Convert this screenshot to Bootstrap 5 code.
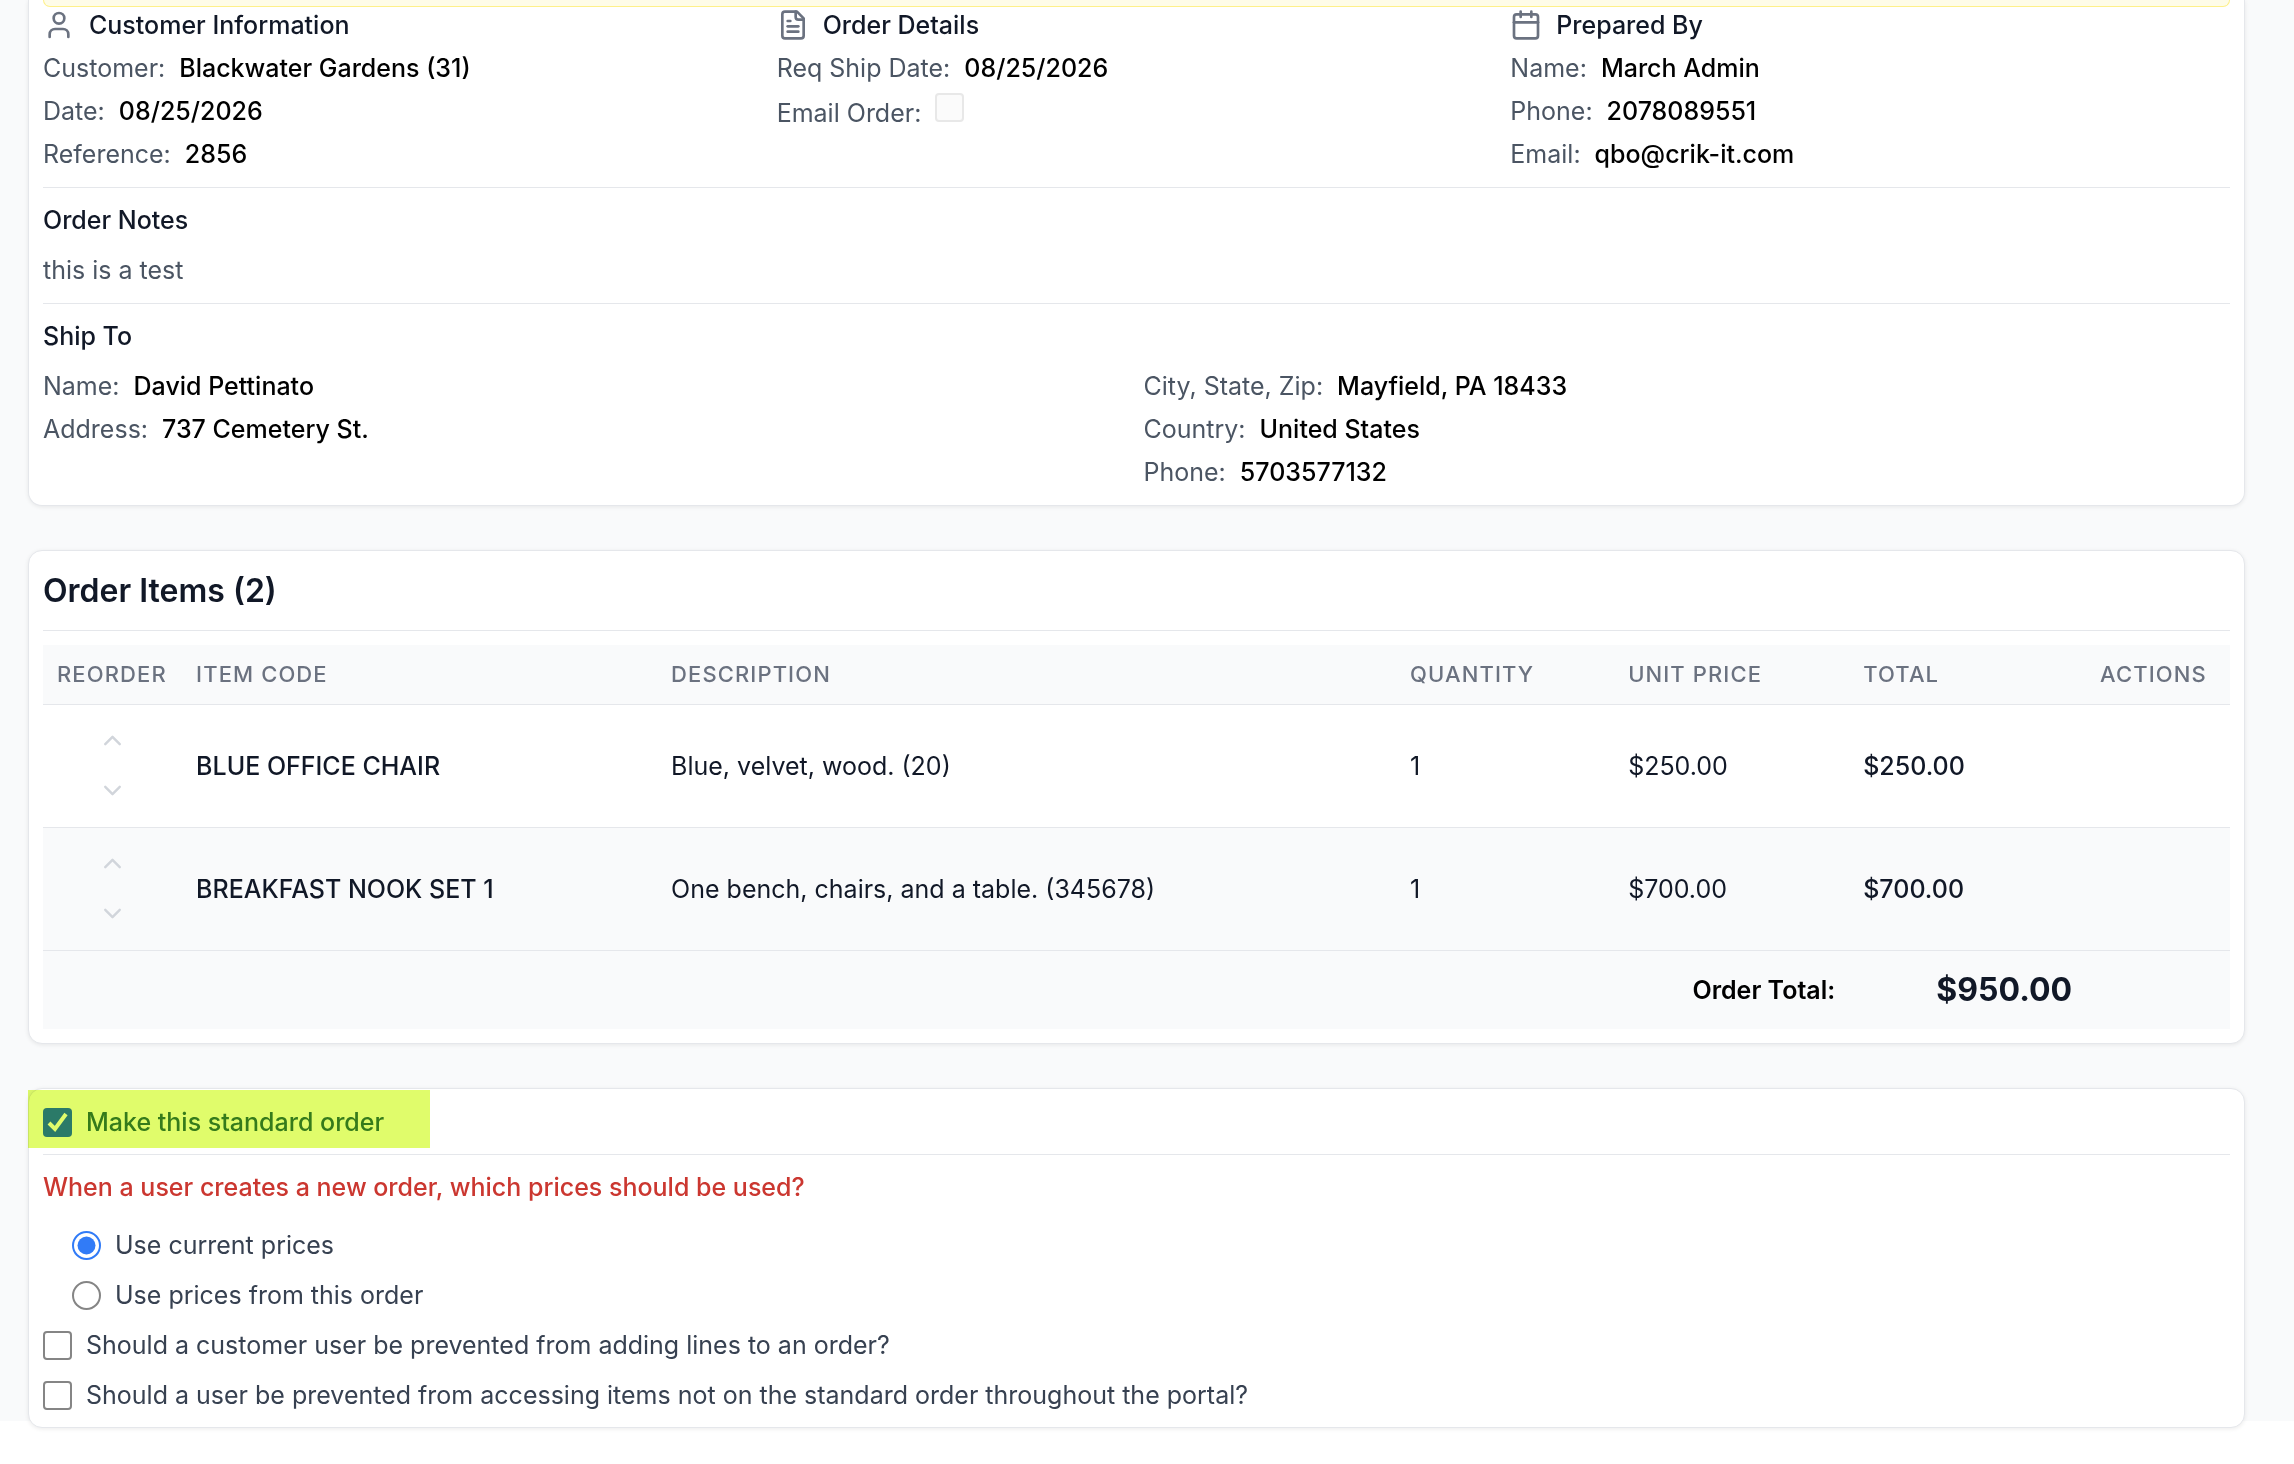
<!DOCTYPE html>
<html lang="en">
<head>
<meta charset="utf-8">
<meta name="viewport" content="width=device-width, initial-scale=1">
<title>Order 2856</title>
<link href="https://cdn.jsdelivr.net/npm/bootstrap@5.3.0/dist/css/bootstrap.min.css" rel="stylesheet">
<style>
  :root { --ink: #111827; --line: #e5e7eb; --soft: #f9fafb; --gap: 14px; }
  body { font-family: Inter, "Liberation Sans", sans-serif; font-size: 25px; line-height: 36px; color: var(--ink); background: #fff; }
  .page-area { background: linear-gradient(var(--soft), var(--soft)) no-repeat 0 0 / 100% calc(100% - 42px); padding: 0 49px 35px 28px; gap: 44px; }
  .panel { --bs-card-border-color: var(--line); --bs-card-border-radius: 14px; --bs-card-color: var(--ink); padding: 0 var(--gap); box-shadow: 0 1px 4px rgba(0, 0, 0, .08); }
  .panel-first { border-top: 0; border-top-left-radius: 0; border-top-right-radius: 0; }
  .panel-last { padding-bottom: var(--gap); }
  .notice-end { height: 7px; background: #fefce8; border: 1px solid #fef08a; border-top: 0; border-radius: 0 0 14px 14px; }
  .block { padding: 14px 0 15px; }
  .block + .block { border-top: 1px solid var(--line); }
  .block-top { padding-top: 0; }
  .sub-title { font-size: 25px; line-height: 36px; font-weight: 500; margin: 0; }
  .sub-title svg { width: 32px; height: 32px; color: #6b7280; }
  .pad-gap { gap: var(--gap); }
  .row-gap-s { gap: 7px; }
  .grid-gap { --bs-gutter-x: 14px; --bs-gutter-y: 0; }
  .field { display: flex; align-items: baseline; gap: 14px; margin: 0; }
  .field dt, .field label, .note-text { font-weight: 400; color: #4b5563; }
  .field dd { font-weight: 500; color: #000; margin: 0; }
  .section-title { font-size: 32px; line-height: 50px; font-weight: 600; margin: 0; padding: 15px 0 14px; border-bottom: 1px solid var(--line); }
  .items { --bs-table-bg: transparent; --bs-table-color: var(--ink); table-layout: fixed; margin: var(--gap) 0; border-color: var(--line); }
  .items > :not(caption) > * > * { padding: 0 14px; border: 0; vertical-align: middle; box-shadow: none; }
  .items tr { border-bottom: 1px solid var(--line); }
  .items thead, .items tfoot, .items tbody tr:nth-child(even) { background: var(--soft); }
  .items thead th { height: 59px; font-size: 22px; font-weight: 500; letter-spacing: .05em; text-transform: uppercase; color: #6b7280; white-space: nowrap; }
  .items tbody td, .items tbody th { height: 123px; font-weight: 400; }
  .items tbody th, .items .line-total { font-weight: 500; }
  .items tfoot tr { border-bottom: 0; }
  .items tfoot th, .items tfoot td { height: 79px; font-weight: 600; }
  .items tfoot th { color: #000; }
  .items tfoot .grand { font-size: 32px; font-weight: 700; }
  .move-btn { --bs-btn-padding-x: 7px; --bs-btn-padding-y: 7px; --bs-btn-disabled-opacity: 1; --bs-btn-disabled-color: #d1d5db; line-height: 1; }
  .move-btn svg { display: block; width: 29px; height: 29px; }
  .choice { display: flex; align-items: center; gap: 14px; color: #374151; }
  .form-check-input { flex: none; width: 29px; height: 29px; margin: 0; border: 2px solid #858585; background-color: #fff; }
  .form-check-input[type=checkbox] { border-radius: 4px; }
  .form-check-input:checked { background-color: #317bf7; border-color: #317bf7; }
  .form-check-input:checked[type=checkbox] { border: 0; background-size: 100% 100%; background-image: url("data:image/svg+xml,%3Csvg xmlns='http://www.w3.org/2000/svg' viewBox='0 0 29 29'%3E%3Cpath d='M6 15L12 21L23 6' fill='none' stroke='%23fff' stroke-width='4'/%3E%3C/svg%3E"); }
  .form-check-input:checked[type=radio] { background-color: #fff; background-origin: border-box; background-size: 100% 100%; background-image: url("data:image/svg+xml,%3Csvg xmlns='http://www.w3.org/2000/svg' viewBox='0 0 58 58'%3E%3Ccircle cx='29' cy='29' r='18' fill='%23317bf7'/%3E%3C/svg%3E"); }
  .form-check-input:disabled { opacity: 1; border-color: #e8e8e8; background-color: #fbfbfb; }
  .choice-main { padding: 15px 0 14px; border-bottom: 1px solid var(--line); color: #3c7c3f; font-weight: 500; }
  .question { color: #cb3730; font-weight: 500; padding: var(--gap) 0 0; margin: 0 0 22px; }
  .marker { position: absolute; left: -1px; top: 1px; width: 402px; height: 58px; background: #e0fc6b; mix-blend-mode: multiply; pointer-events: none; }
  .indent { padding-left: 29px; }
</style>
<script src="https://cdn.jsdelivr.net/npm/bootstrap@5.3.0/dist/js/bootstrap.bundle.min.js" defer></script>
</head>
<body>
<main class="page-area d-flex flex-column">

  <section class="card panel panel-first">
    <div class="notice-end"></div>
    <div class="block block-top">
      <div class="row grid-gap">
        <div class="col-4 d-flex flex-column row-gap-s">
          <h2 class="sub-title d-flex align-items-center pad-gap">
            <svg viewBox="0 0 24 24" fill="none" stroke="currentColor" stroke-width="2" stroke-linecap="round" stroke-linejoin="round" aria-hidden="true"><path d="M19 21v-2a4 4 0 0 0-4-4H9a4 4 0 0 0-4 4v2"/><circle cx="12" cy="7" r="4"/></svg>
            Customer Information</h2>
          <dl class="field"><dt>Customer:</dt><dd>Blackwater Gardens (31)</dd></dl>
          <dl class="field"><dt>Date:</dt><dd>08/25/2026</dd></dl>
          <dl class="field"><dt>Reference:</dt><dd>2856</dd></dl>
        </div>
        <div class="col-4 d-flex flex-column row-gap-s">
          <h2 class="sub-title d-flex align-items-center pad-gap">
            <svg viewBox="0 0 24 24" fill="none" stroke="currentColor" stroke-width="2" stroke-linecap="round" stroke-linejoin="round" aria-hidden="true"><path d="M15 2H6a2 2 0 0 0-2 2v16a2 2 0 0 0 2 2h12a2 2 0 0 0 2-2V7Z"/><path d="M14 2v4a2 2 0 0 0 2 2h4"/><path d="M10 9H8"/><path d="M16 13H8"/><path d="M16 17H8"/></svg>
            Order Details</h2>
          <dl class="field"><dt>Req Ship Date:</dt><dd>08/25/2026</dd></dl>
          <div class="field"><label for="emailOrder">Email Order:</label><input class="form-check-input" type="checkbox" id="emailOrder" disabled></div>
        </div>
        <div class="col-4 d-flex flex-column row-gap-s">
          <h2 class="sub-title d-flex align-items-center pad-gap">
            <svg viewBox="0 0 24 24" fill="none" stroke="currentColor" stroke-width="2" stroke-linecap="round" stroke-linejoin="round" aria-hidden="true"><path d="M8 2v4"/><path d="M16 2v4"/><rect width="18" height="18" x="3" y="4" rx="2"/><path d="M3 10h18"/></svg>
            Prepared By</h2>
          <dl class="field"><dt>Name:</dt><dd>March Admin</dd></dl>
          <dl class="field"><dt>Phone:</dt><dd>2078089551</dd></dl>
          <dl class="field"><dt>Email:</dt><dd>qbo@crik-it.com</dd></dl>
        </div>
      </div>
    </div>
    <div class="block d-flex flex-column pad-gap">
      <h2 class="sub-title">Order Notes</h2>
      <p class="m-0 note-text">this is a test</p>
    </div>
    <div class="block d-flex flex-column pad-gap">
      <h2 class="sub-title">Ship To</h2>
      <div class="row grid-gap">
        <div class="col-6 d-flex flex-column row-gap-s">
          <dl class="field"><dt>Name:</dt><dd>David Pettinato</dd></dl>
          <dl class="field"><dt>Address:</dt><dd>737 Cemetery St.</dd></dl>
        </div>
        <div class="col-6 d-flex flex-column row-gap-s">
          <dl class="field"><dt>City, State, Zip:</dt><dd>Mayfield, PA 18433</dd></dl>
          <dl class="field"><dt>Country:</dt><dd>United States</dd></dl>
          <dl class="field"><dt>Phone:</dt><dd>5703577132</dd></dl>
        </div>
      </div>
    </div>
  </section>

  <section class="card panel">
    <h2 class="section-title">Order Items (2)</h2>
    <table class="table items">
      <colgroup><col style="width:6.36%"><col style="width:21.72%"><col style="width:33.79%"><col style="width:9.97%"><col style="width:10.75%"><col style="width:10.83%"><col style="width:6.58%"></colgroup>
      <thead>
        <tr><th scope="col">Reorder</th><th scope="col">Item Code</th><th scope="col">Description</th><th scope="col">Quantity</th><th scope="col">Unit Price</th><th scope="col">Total</th><th scope="col">Actions</th></tr>
      </thead>
      <tbody>
        <tr>
          <td><div class="d-flex flex-column align-items-center row-gap-s">
            <button type="button" class="btn border-0 move-btn" disabled aria-label="Move up"><svg viewBox="0 0 24 24" fill="none" stroke="currentColor" stroke-width="2" stroke-linecap="round" stroke-linejoin="round"><path d="m18 15-6-6-6 6"/></svg></button>
            <button type="button" class="btn border-0 move-btn" disabled aria-label="Move down"><svg viewBox="0 0 24 24" fill="none" stroke="currentColor" stroke-width="2" stroke-linecap="round" stroke-linejoin="round"><path d="m6 9 6 6 6-6"/></svg></button>
          </div></td>
          <th scope="row">BLUE OFFICE CHAIR</th><td>Blue, velvet, wood. (20)</td><td>1</td><td>$250.00</td><td class="line-total">$250.00</td><td></td>
        </tr>
        <tr>
          <td><div class="d-flex flex-column align-items-center row-gap-s">
            <button type="button" class="btn border-0 move-btn" disabled aria-label="Move up"><svg viewBox="0 0 24 24" fill="none" stroke="currentColor" stroke-width="2" stroke-linecap="round" stroke-linejoin="round"><path d="m18 15-6-6-6 6"/></svg></button>
            <button type="button" class="btn border-0 move-btn" disabled aria-label="Move down"><svg viewBox="0 0 24 24" fill="none" stroke="currentColor" stroke-width="2" stroke-linecap="round" stroke-linejoin="round"><path d="m6 9 6 6 6-6"/></svg></button>
          </div></td>
          <th scope="row">BREAKFAST NOOK SET 1</th><td>One bench, chairs, and a table. (345678)</td><td>1</td><td>$700.00</td><td class="line-total">$700.00</td><td></td>
        </tr>
      </tbody>
      <tfoot>
        <tr><th scope="row" colspan="5" class="text-end">Order Total:</th><td class="text-end grand">$950.00</td><td></td></tr>
      </tfoot>
    </table>
  </section>

  <section class="card panel panel-last">
    <div class="choice choice-main"><input class="form-check-input" type="checkbox" id="standardOrder" checked><label for="standardOrder">Make this standard order</label></div>
    <p class="question" id="priceQuestion">When a user creates a new order, which prices should be used?</p>
    <div class="d-flex flex-column pad-gap">
      <div class="d-flex flex-column pad-gap indent" role="radiogroup" aria-labelledby="priceQuestion">
        <div class="choice"><input class="form-check-input" type="radio" name="prices" id="currentPrices" checked><label for="currentPrices">Use current prices</label></div>
        <div class="choice"><input class="form-check-input" type="radio" name="prices" id="orderPrices"><label for="orderPrices">Use prices from this order</label></div>
      </div>
      <div class="choice"><input class="form-check-input" type="checkbox" id="preventLines"><label for="preventLines">Should a customer user be prevented from adding lines to an order?</label></div>
      <div class="choice"><input class="form-check-input" type="checkbox" id="preventItems"><label for="preventItems">Should a user be prevented from accessing items not on the standard order throughout the portal?</label></div>
    </div>
    <div class="marker"></div>
  </section>

</main>
</body>
</html>
